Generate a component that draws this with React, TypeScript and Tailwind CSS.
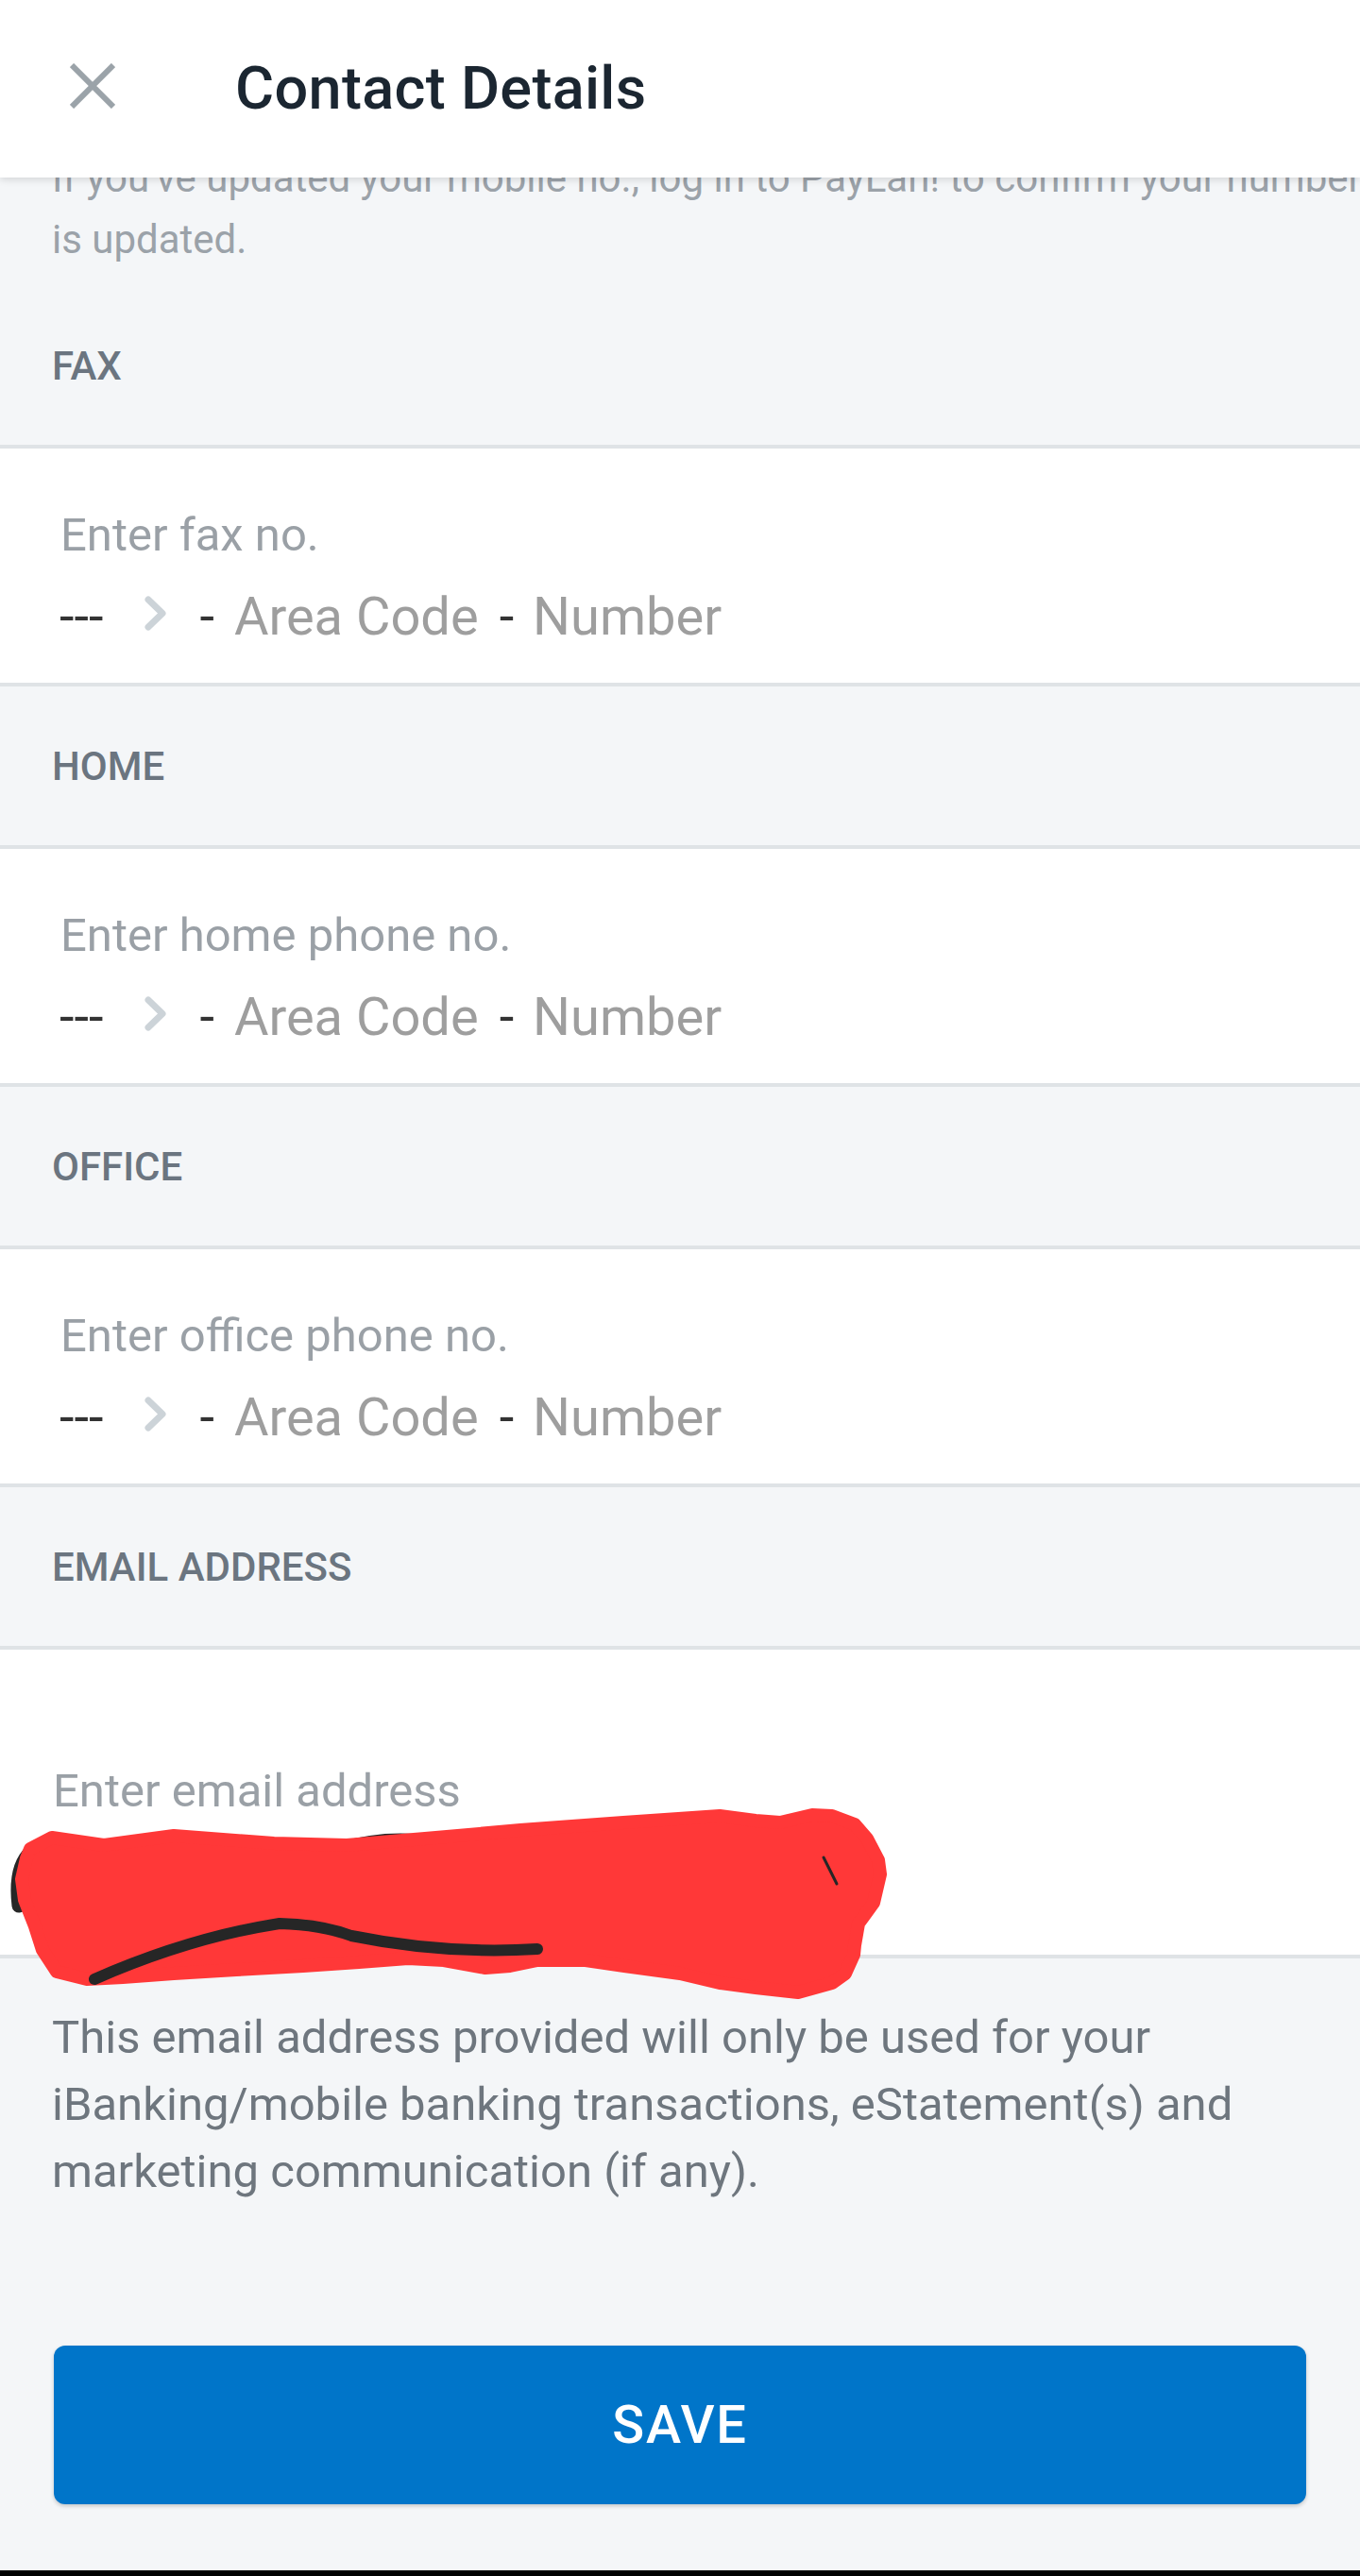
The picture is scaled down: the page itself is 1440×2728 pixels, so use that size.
import React from "react";

function CloseIcon() {
  return (
    <svg width="48" height="48" viewBox="0 0 48 48" className="shrink-0">
      <path d="M2 2 L46 46 M46 2 L2 46" stroke="#9ba3a9" strokeWidth="6" fill="none" />
    </svg>
  );
}

function Chevron() {
  return (
    <svg width="26" height="39" viewBox="0 0 26 39" className="self-start mt-[10px] ml-[43px] shrink-0">
      <polyline points="5,5 20,19.5 5,34" stroke="#ccd3d8" strokeWidth="7" fill="none" strokeLinecap="round" strokeLinejoin="round" />
    </svg>
  );
}

function Divider() {
  return <div className="h-[4px] bg-[#dfe3e6]" />;
}

function SectionLabel({ children }: { children: React.ReactNode }) {
  return (
    <div className="h-[168px] flex items-center pl-[55px] text-[42px] leading-[49px] font-medium text-[#6b7580]">
      {children}
    </div>
  );
}

function PhoneField({ placeholder }: { placeholder: string }) {
  return (
    <div className="h-[248px] bg-white pt-[63px] pl-[60px]">
      <div className="pl-[4px] text-[49px] leading-[57px] text-[#9aa0a6]">{placeholder}</div>
      <div className="mt-[25px] flex items-start h-[66px] text-[56px] leading-[66px]">
        <span className="ml-[3px] text-[#333333]">---</span>
        <Chevron />
        <span className="ml-[33px] text-[#333333]">-</span>
        <span className="ml-[21px] text-[#9e9e9e]">Area Code</span>
        <span className="ml-[22px] text-[#333333]">-</span>
        <span className="ml-[20px] text-[#9e9e9e]">Number</span>
      </div>
    </div>
  );
}

function Scribble() {
  return (
    <svg
      width="960"
      height="230"
      viewBox="0 0 960 230"
      className="absolute left-0 top-[153px] z-10 pointer-events-none"
    >
      {/* black marks underneath */}
      <path d="M64 50 Q12 52 20 118" stroke="#262626" strokeWidth="15" fill="none" strokeLinecap="round" />
      <path d="M360 56 Q420 38 482 54" stroke="#262626" strokeWidth="10" fill="none" strokeLinecap="round" />
      <polygon
        points="32,58 55,46 110,54 184,44 290,52 367,54 450,47 551,38 660,30 762,23 800,28 826,30 860,22 881,23 905,32 918,47 930,70 932,85 925,115 909,137 905,160 904,170 895,190 881,200 845,210 800,205 762,200 720,190 661,182 620,176 569,176 540,182 514,184 470,176 432,174 380,178 321,182 250,186 184,190 130,194 92,196 60,188 45,165 37,140 26,112 23,90 28,68"
        fill="#ff3838"
        stroke="#ff3838"
        strokeWidth="14"
        strokeLinejoin="round"
      />
      {/* black marks on top */}
      <path d="M100 196 Q200 152 296 137 Q340 138 372 150 Q470 170 569 164" stroke="#262626" strokeWidth="12" fill="none" strokeLinecap="round" />
      <path d="M872 67 L886 95" stroke="#262626" strokeWidth="3" fill="none" strokeLinecap="round" />
    </svg>
  );
}

export default function App() {
  return (
    <div className="w-[1440px] h-[2728px] bg-[#f4f6f8] font-[Roboto,sans-serif] flex flex-col overflow-hidden">
      <header className="relative z-20 h-[188px] shrink-0 bg-white shadow-[0_2px_8px_rgba(0,0,0,0.14)] flex items-start">
        <div className="mt-[67px] ml-[74px]">
          <CloseIcon />
        </div>
        <h1 className="mt-[62px] ml-[127px] text-[63px] leading-[63px] font-medium text-[#1b2631] tracking-[0.005em]">
          Contact Details
        </h1>
      </header>

      <p className="-mt-[32px] pb-[17px] pl-[55px] text-[42px] leading-[65px] text-[#9ba2a9] whitespace-nowrap">
        <span className="block">If you've updated your mobile no., log in to PayLah! to confirm your number</span>
        <span className="block">is updated.</span>
      </p>

      <SectionLabel>FAX</SectionLabel>
      <Divider />
      <PhoneField placeholder="Enter fax no." />
      <Divider />

      <SectionLabel>HOME</SectionLabel>
      <Divider />
      <PhoneField placeholder="Enter home phone no." />
      <Divider />

      <SectionLabel>OFFICE</SectionLabel>
      <Divider />
      <PhoneField placeholder="Enter office phone no." />
      <Divider />

      <SectionLabel>EMAIL ADDRESS</SectionLabel>
      <Divider />
      <div className="relative h-[323px] bg-white pt-[121px] pl-[56px]">
        <div className="text-[49px] leading-[57px] text-[#9aa0a6]">Enter email address</div>
        <Scribble />
      </div>
      <Divider />

      <p className="mt-[48px] pl-[55px] text-[49px] leading-[71px] text-[#6e767e] whitespace-nowrap">
        <span className="block">This email address provided will only be used for your</span>
        <span className="block">iBanking/mobile banking transactions, eStatement(s) and</span>
        <span className="block">marketing communication (if any).</span>
      </p>

      <button className="mt-[149px] mx-[57px] h-[168px] shrink-0 rounded-[12px] bg-[#0075c9] shadow-[0_2px_4px_rgba(0,0,0,0.2)] text-white text-[56px] font-medium tracking-[0.03em]">
        SAVE
      </button>

      <div className="mt-auto h-[6px] bg-black shrink-0" />
    </div>
  );
}
